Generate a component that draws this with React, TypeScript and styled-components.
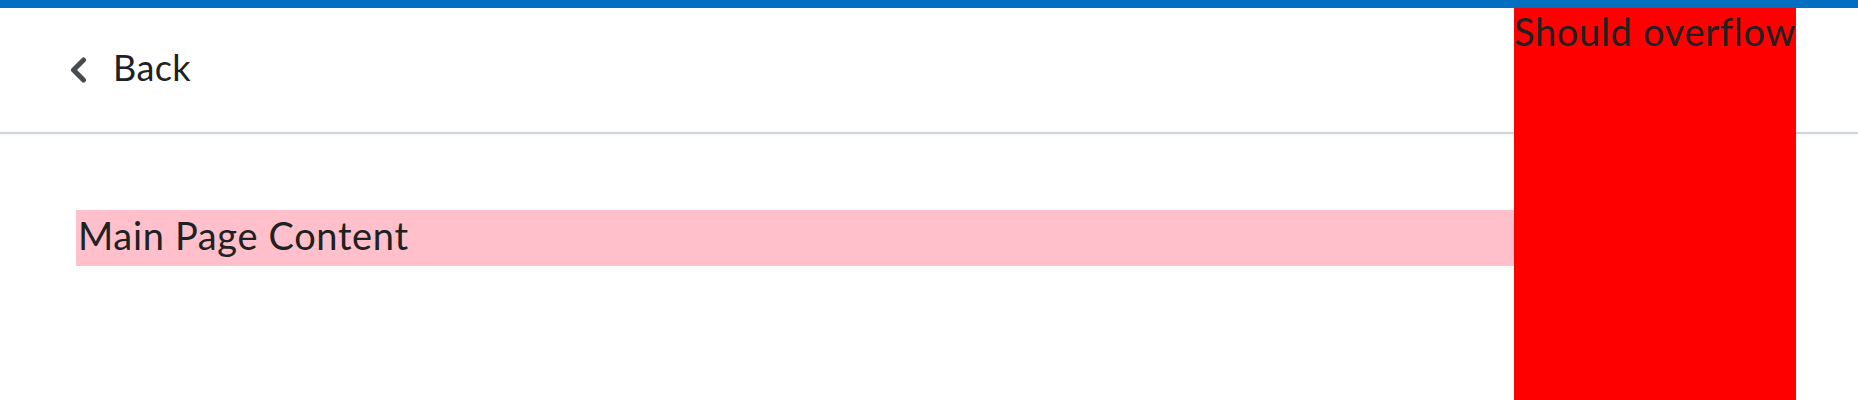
import React from "react";
import styled, { createGlobalStyle } from "styled-components";

const Global = createGlobalStyle`
  html, body {
    margin: 0;
    padding: 0;
    background: #ffffff;
    font-family: Lato, "Open Sans", sans-serif;
    color: #202122;
    overflow: hidden;
  }
`;

const Page = styled.div`
  position: relative;
  min-height: 400px;
`;

const TopBar = styled.div`
  height: 8px;
  background: #006fbf;
`;

const Header = styled.header`
  height: 124px;
  display: flex;
  align-items: center;
  padding-left: 70px;
  border-bottom: 2px solid #cdd5dc;
  box-shadow: 0 2px 4px rgba(0, 0, 0, 0.03);
`;

const BackButton = styled.button`
  display: flex;
  align-items: center;
  gap: 26px;
  background: none;
  border: none;
  padding: 0;
  font-family: inherit;
  color: #202122;
  cursor: pointer;
`;

const BackLabel = styled.span`
  font-size: 36px;
  letter-spacing: 0.4px;
  line-height: 44px;
  padding-bottom: 6px;
`;

const Main = styled.main`
  padding: 76px;
`;

const ContentBox = styled.div`
  background: #ffc0cb;
  height: 56px;
  padding-left: 2px;
  font-size: 38px;
  line-height: 50px;
  letter-spacing: 0.65px;
`;

const Overflow = styled.div`
  position: absolute;
  top: 8px;
  right: 62px;
  height: 420px;
  background: #ff0000;
  font-size: 38px;
  line-height: 1;
  letter-spacing: 0.7px;
  padding-top: 4px;
  color: #202122;
  white-space: nowrap;
`;

const Chevron = () => (
  <svg width="17" height="26" viewBox="0 0 17 26" fill="none">
    <path
      d="M13.5 3 L3.5 13 L13.5 23"
      stroke="#494c4e"
      strokeWidth="5"
      strokeLinecap="round"
      strokeLinejoin="round"
    />
  </svg>
);

export default function App() {
  return (
    <Page>
      <Global />
      <TopBar />
      <Header>
        <BackButton>
          <Chevron />
          <BackLabel>Back</BackLabel>
        </BackButton>
      </Header>
      <Main>
        <ContentBox>Main Page Content</ContentBox>
      </Main>
      <Overflow>Should overflow</Overflow>
    </Page>
  );
}
